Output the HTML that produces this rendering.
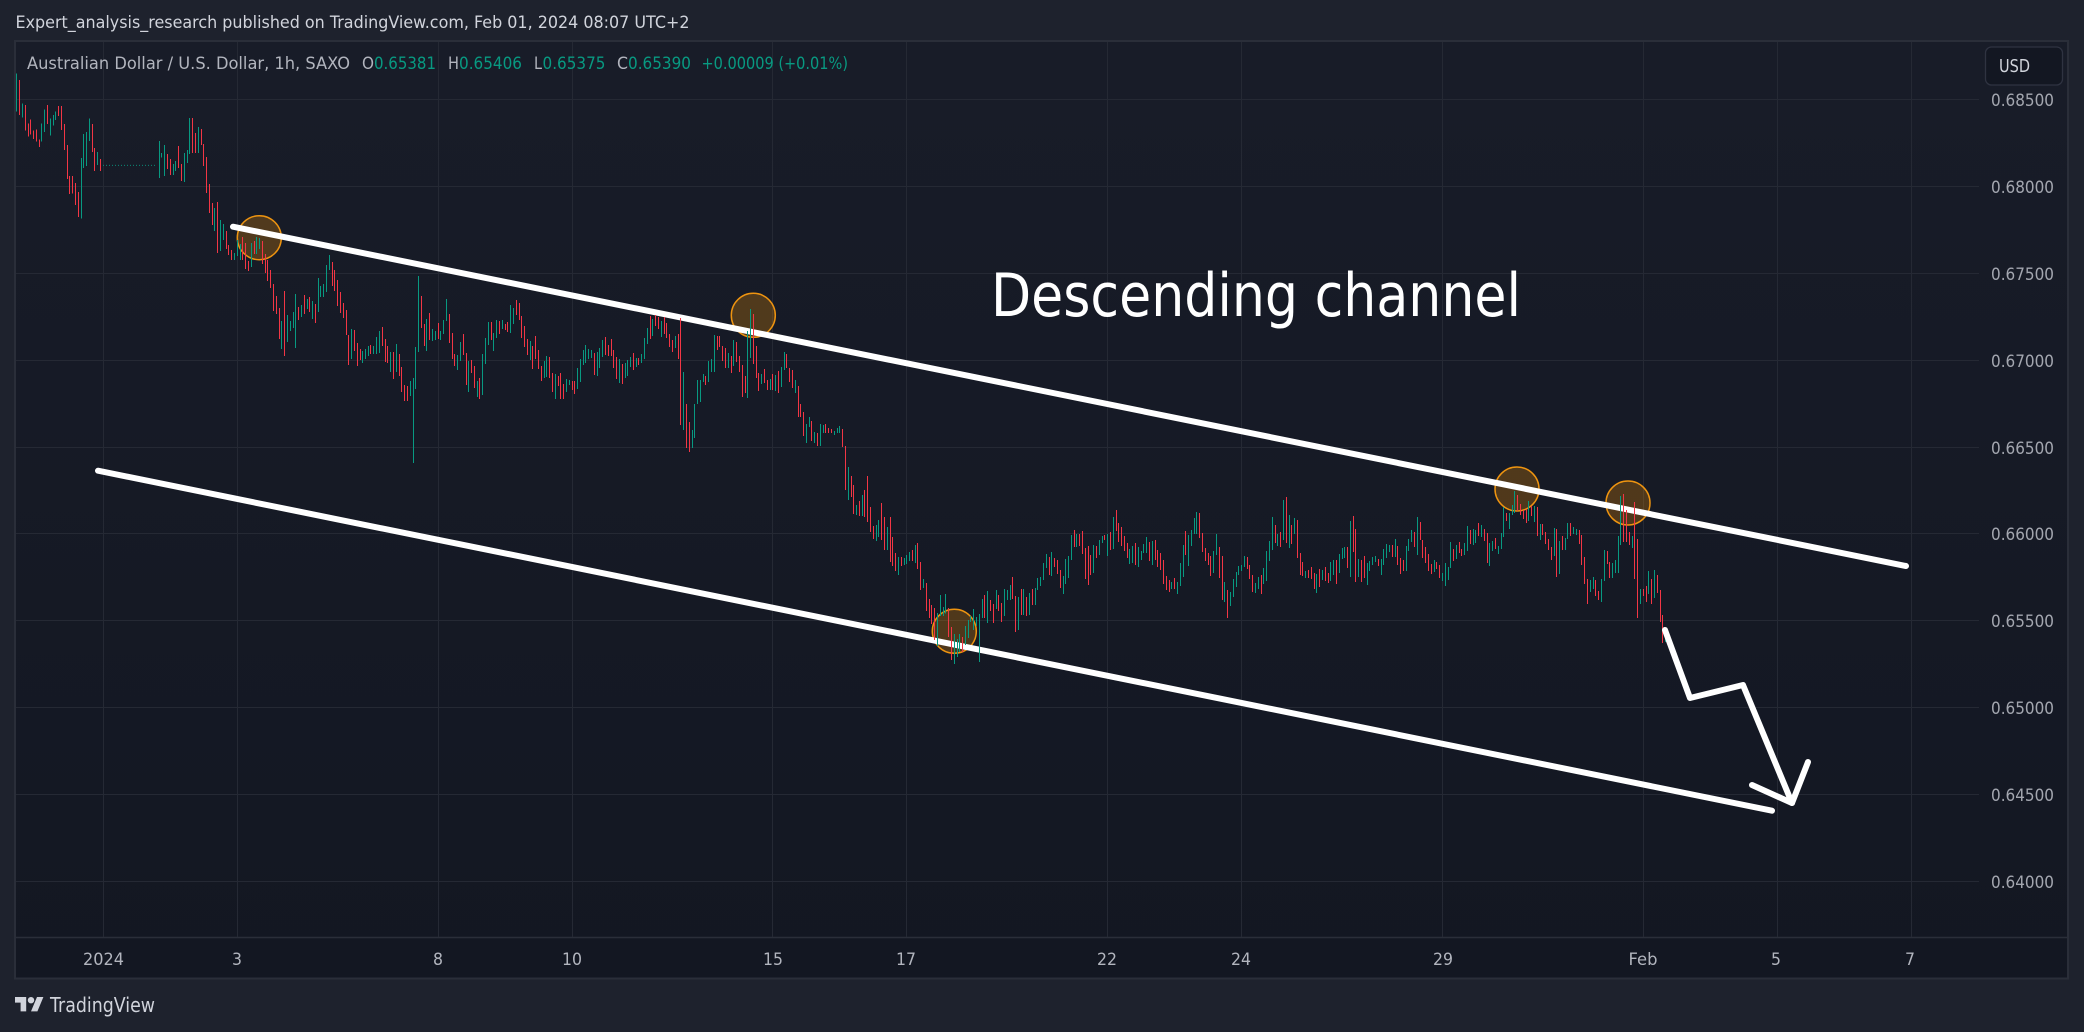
<!DOCTYPE html>
<html lang="en">
<head>
<meta charset="utf-8">
<title>AUD/USD Descending channel</title>
<style>
html,body{margin:0;padding:0;background:#1e222d;width:2084px;height:1032px;overflow:hidden}
svg{display:block;position:absolute;left:0;top:0}
text{font-family:"DejaVu Sans","Liberation Sans",sans-serif}
.lg{font-size:17px;fill:#b2b5be}
.gv{font-size:17px;fill:#089981}
.pr{font-size:17px;fill:#a3a6af}
.tm{font-size:17px;fill:#b2b5be;text-anchor:middle}
.g{stroke:#089981;stroke-width:3;fill:none;shape-rendering:crispEdges}
.r{stroke:#f23645;stroke-width:3;fill:none;shape-rendering:crispEdges}
</style>
</head>
<body>
<svg width="2084" height="1032" viewBox="0 0 2084 1032" xmlns="http://www.w3.org/2000/svg">
<defs>
<linearGradient id="bg" x1="0" y1="0" x2="0" y2="1">
<stop offset="0" stop-color="#181c28"/>
<stop offset="1" stop-color="#131722"/>
</linearGradient>
</defs>
<rect width="2084" height="1032" fill="#1e222d"/>
<text x="15.500" y="28" font-size="17" fill="#d1d4dc" textLength="674" lengthAdjust="spacingAndGlyphs">Expert_analysis_research published on TradingView.com, Feb 01, 2024 08:07 UTC+2</text>
<rect x="15" y="41" width="2053" height="937.500" fill="url(#bg)" stroke="#2a2e39" stroke-width="2"/>
<path d="M16 937.500H2067" stroke="#2a2e39" stroke-width="1.500" fill="none"/>

<!-- grid -->
<g stroke="#252934" stroke-width="1" fill="none" shape-rendering="crispEdges">
<path d="M16 99.500H1979M16 186.500H1979M16 273.500H1979M16 360.500H1979M16 447.500H1979M16 533.500H1979M16 620.500H1979M16 707.500H1979M16 794.500H1979M16 881.500H1979"/>
<path d="M103.500 42V937M237.500 42V937M438.500 42V937M572.500 42V937M772.500 42V937M906.500 42V937M1107.500 42V937M1241.500 42V937M1442.500 42V937M1643.500 42V937M1777.500 42V937M1911.500 42V937"/>
</g>

<!-- circles -->
<g fill="#ff9800" fill-opacity=".25" stroke="#ee9410" stroke-width="1.500">
<circle cx="259.300" cy="237.700" r="22"/>
<circle cx="753.300" cy="315.300" r="22"/>
<circle cx="954.300" cy="631.300" r="22"/>
<circle cx="1517" cy="489" r="22"/>
<circle cx="1628" cy="503" r="22"/>
</g>

<!-- channel lines -->
<g stroke="#fff" stroke-width="6" stroke-linecap="round" stroke-linejoin="round" fill="none">
<path d="M233 226.700L1906 566"/>
<path d="M98 470.700L1772 810.700"/>
</g>

<!-- bars, crop 1 -->
<g transform="translate(15 70) scale(.33333)">
<path class="g" d="M4 10V125M22 100V143M79 160V215M88 118V186M106 145V197M115 135V167M121 124V150M199 264V446M205 192V294M214 186V288M223 145V213M247 246V285M433 213V324M439 249V262M448 225V318M475 282V315M481 273V303M508 249V336M517 240V279M523 144V252M550 171V249M598 414V483M616 450V543M625 462V510M658 549V570M667 510V558M676 522V570M709 519V591M724 501V552M733 504V537"/>
<path class="r" d="M13 30V135M31 105V182M40 160V200M46 148V194M55 182V207M64 178V215M73 208V231M97 105V162M130 108V138M139 108V180M148 162V240M157 225V327M163 318V372M172 318V370M181 339V405M190 366V441M232 162V246M238 234V303M256 267V303M457 252V297M466 267V315M490 228V294M499 282V333M532 144V249M541 189V249M559 177V225M565 222V288M574 261V369M583 342V429M592 399V465M607 396V549M634 483V537M640 525V555M649 540V570M682 501V570M691 519V597M700 573V603M718 513V552"/>
<path d="M264 286H426" stroke="#089981" stroke-width="2.500" stroke-dasharray="3 6" fill="none"/>
</g>

<!-- bars, crop 2 -->
<g transform="translate(260 240) scale(.33333)">
<path class="g" d="M64 243V327M82 225V306M91 243V273M100 216V264M106 162V324M124 195V231M142 177V207M157 183V237M175 114V216M181 138V171M190 132V171M199 75V156M208 45V90M274 267V357M307 333V369M316 327V357M325 318V348M340 318V342M349 291V342M358 273V339M391 336V396M409 312V396M451 423V468M460 414V669M466 321V447M475 108V336M499 237V333M517 267V303M526 273V300M541 273V300M550 240V282M559 177V243M592 345V390M601 306V363M625 363V456M652 423V471M667 342V465M676 294V372M685 246V315M700 279V333M709 240V294M727 240V267M751 195V279M760 204V252M811 303V360M853 363V414M859 348V411M886 402V477M919 417V456M928 420V435M952 384V447M961 357V426M970 330V375M976 315V369M985 327V357M994 330V354M1012 336V408M1018 324V384M1027 300V351M1078 357V429M1096 369V414M1102 360V408M1111 351V381M1129 354V381M1144 342V369M1153 294V357M1162 264V312M1177 237V288M1204 243V291M1246 288V324"/>
<path class="r" d="M7 3V72M16 42V99M22 60V123M31 90V144M40 132V213M49 168V222M58 204V297M73 153V348M115 201V240M133 165V222M148 171V216M166 192V249M217 66V138M223 90V153M232 120V198M241 156V219M250 189V234M259 210V285M265 285V375M283 270V333M292 309V378M301 327V360M331 315V342M367 261V318M376 297V366M382 318V369M400 336V417M418 342V408M424 381V456M433 435V483M442 438V483M484 168V264M493 252V318M508 219V300M535 249V297M568 222V309M577 279V357M583 342V378M610 282V345M619 339V435M634 360V399M643 378V444M658 414V477M694 246V300M718 243V282M736 252V270M742 246V276M769 180V225M778 189V240M784 228V294M793 258V321M802 297V345M817 318V387M826 288V357M835 330V387M844 378V423M868 351V414M877 399V456M895 408V438M901 399V477M910 432V477M937 423V450M943 423V462M1003 339V405M1036 291V345M1045 315V348M1054 297V348M1060 330V384M1069 351V417M1087 372V432M1120 339V390M1135 354V375M1171 228V297M1186 225V258M1195 231V267M1213 231V282M1219 249V294M1228 282V321M1237 300V336M1255 282V357"/>
</g>

<!-- bars, crop 3 -->
<g transform="translate(600 280) scale(.33333)">
<path class="g" d="M250 276V450M277 450V504M283 372V474M292 300V372M301 300V366M310 282V306M325 243V306M334 237V276M343 165V276M385 219V264M400 180V258M442 153V354M451 87V234M484 282V312M511 297V330M526 285V333M544 261V321M553 216V270M586 300V339M619 432V489M628 411V441M643 456V489M661 432V498M670 435V459M703 453V465M712 444V459M718 438V459"/>
<path class="r" d="M241 114V435M259 372V504M268 426V516M316 288V315M352 168V210M358 168V201M367 198V243M376 204V264M394 228V279M409 186V246M418 228V276M427 255V351M436 288V339M460 102V252M469 198V294M475 279V333M493 267V309M502 300V330M517 282V330M535 273V339M559 222V264M568 264V306M577 270V324M595 318V411M601 372V411M610 396V468M634 423V483M652 459V498M676 432V459M685 444V459M694 447V459M727 447V501"/>
</g>

<!-- bars, crop 4 -->
<g transform="translate(780 380) scale(.33333)">
<path class="g" d="M205 261V360M229 375V405M247 345V408M289 435V483M295 420V471M322 441V510M355 531V585M373 534V555M379 525V552M388 516V543M406 495V549M430 597V624M472 699V798M481 645V708M490 681V708M496 642V700M523 762V852M532 777V831M538 762V816M556 738V795M565 720V774M571 708V726M580 687V750M589 711V738M598 702V846M607 657V714M622 633V729M649 630V687M673 627V708M682 630V660M691 615V660M715 651V750M730 627V705M748 639V705M766 624V675M772 594V630M781 591V618M790 549V600M799 522V564M814 516V588M850 588V642M856 537V612M865 528V594M874 465V540M889 462V501M940 495V579M958 480V525M967 468V489M982 462V528M1000 411V507M1048 507V552M1057 498V549M1075 501V561M1084 513V540M1090 492V519M1099 471V519M1117 483V555M1174 606V627M1192 606V642M1201 549V618M1210 495V591M1225 465V558"/>
<path class="r" d="M196 198V330M214 288V351M220 315V402M238 363V408M253 330V411M262 288V426M271 381V456M280 438V477M304 369V480M313 411V510M331 411V546M337 471V558M346 519V573M364 531V558M397 510V543M412 489V567M421 546V630M439 609V693M448 657V714M454 675V732M463 684V780M505 684V771M514 741V840M547 771V816M613 645V714M631 660V693M640 672V729M655 645V693M664 669V726M697 591V657M706 648V756M724 627V705M739 651V708M757 627V675M808 531V585M823 534V561M832 540V582M841 570V624M883 450V501M898 462V498M907 453V522M916 504V597M925 498V615M931 525V585M949 498V534M973 465V480M991 456V510M1009 390V453M1015 429V486M1024 441V498M1033 468V513M1042 489V534M1066 489V555M1108 486V543M1126 480V540M1132 510V561M1141 519V570M1150 540V612M1159 588V630M1168 600V636M1183 594V627M1216 453V525"/>
</g>

<!-- bars, crop 5 -->
<g transform="translate(1190 470) scale(.33333)">
<path class="g" d="M4 180V228M13 144V192M19 126V192M70 243V309M79 192V255M103 336V396M121 366V408M130 327V381M139 306V351M145 288V315M154 285V303M163 258V291M196 339V369M205 321V357M220 294V342M229 243V333M238 213V273M247 141V240M262 192V228M280 90V210M298 135V234M313 144V192M346 303V324M379 312V369M397 300V330M421 276V333M430 270V315M448 252V309M457 234V267M463 231V264M481 153V321M505 267V321M532 279V345M538 273V303M547 261V285M556 258V276M574 267V315M580 237V285M589 222V264M598 225V246M616 207V261M649 228V303M655 207V243M664 180V216M682 141V255M733 270V306M757 309V333M766 279V348M775 291V330M781 216V294M799 225V267M823 219V255M832 168V243M850 177V225M856 180V219M874 165V201M898 219V288M907 213V243M925 228V252M934 189V237M940 111V201M958 129V177M967 105V135M973 63V129M1015 93V153M1033 108V156M1051 162V210M1093 174V258M1108 213V312M1126 204V240M1132 159V207M1150 171V192M1159 177V195M1201 330V366M1210 321V357M1234 327V396M1243 240V333"/>
<path class="r" d="M28 129V204M37 189V246M46 234V273M55 249V285M61 258V318M88 231V324M97 258V390M112 360V444M172 261V297M178 285V327M187 315V366M214 315V372M256 165V219M271 186V231M289 81V219M304 165V222M322 150V264M331 249V315M337 276V318M355 300V324M364 291V327M373 309V357M388 297V351M406 291V333M415 309V339M439 270V342M472 231V294M490 138V246M496 177V336M514 270V336M523 258V324M565 267V288M607 225V261M622 228V285M631 264V312M640 270V303M673 186V231M691 156V210M697 210V264M706 231V279M715 252V303M724 282V312M739 276V297M748 285V324M790 237V273M808 216V249M814 237V258M841 180V222M865 159V198M883 177V213M892 189V279M916 204V237M949 129V153M982 75V123M991 102V135M1000 120V147M1009 117V159M1024 108V138M1042 111V198M1057 162V195M1066 186V222M1075 207V240M1084 231V270M1099 177V321M1117 198V240M1141 159V198M1168 180V222M1174 195V285M1183 261V342M1192 327V402M1216 330V378M1225 363V390M1252 243V282"/>
</g>

<!-- bars, crop 6 -->
<g transform="translate(1500 460) scale(.33333)">
<path class="g" d="M337 309V354M346 300V339M355 228V339M361 108V255M397 228V264M421 387V432M445 333V402M463 330V414M496 505V546"/>
<path class="r" d="M328 306V354M370 102V246M379 150V246M388 216V255M403 126V357M412 237V474M430 387V408M439 378V426M454 357V432M472 345V399M481 390V486M487 465V549"/>
</g>

<!-- arrow -->
<g stroke="#fff" stroke-width="6" stroke-linecap="round" stroke-linejoin="round" fill="none">
<path d="M1665 630L1690 698L1743 685L1792 803"/>
<path d="M1752 785L1792 803L1808 762"/>
</g>

<!-- headline -->
<text x="991" y="316" font-size="60" fill="#fff" textLength="530" lengthAdjust="spacingAndGlyphs">Descending channel</text>

<!-- legend -->
<text class="lg" x="27" y="69" textLength="323" lengthAdjust="spacingAndGlyphs">Australian Dollar / U.S. Dollar, 1h, SAXO</text>
<text class="lg" x="362" y="69" textLength="12" lengthAdjust="spacingAndGlyphs">O</text><text class="gv" x="374" y="69" textLength="62" lengthAdjust="spacingAndGlyphs">0.65381</text>
<text class="lg" x="448" y="69" textLength="11" lengthAdjust="spacingAndGlyphs">H</text><text class="gv" x="459" y="69" textLength="63" lengthAdjust="spacingAndGlyphs">0.65406</text>
<text class="lg" x="534" y="69" textLength="8" lengthAdjust="spacingAndGlyphs">L</text><text class="gv" x="542.500" y="69" textLength="63" lengthAdjust="spacingAndGlyphs">0.65375</text>
<text class="lg" x="617" y="69" textLength="11" lengthAdjust="spacingAndGlyphs">C</text><text class="gv" x="628" y="69" textLength="63" lengthAdjust="spacingAndGlyphs">0.65390</text>
<text class="gv" x="701.500" y="69" textLength="146.500" lengthAdjust="spacingAndGlyphs">+0.00009 (+0.01%)</text>

<!-- USD button -->
<rect x="1985.500" y="47" width="77" height="38" rx="6" fill="#131722" stroke="#2f3341" stroke-width="1.300"/>
<text x="1999" y="72" font-size="18" fill="#d1d4dc" textLength="31" lengthAdjust="spacingAndGlyphs">USD</text>

<!-- price axis -->
<text class="pr" x="1991" y="106" textLength="63" lengthAdjust="spacingAndGlyphs">0.68500</text>
<text class="pr" x="1991" y="193" textLength="63" lengthAdjust="spacingAndGlyphs">0.68000</text>
<text class="pr" x="1991" y="280" textLength="63" lengthAdjust="spacingAndGlyphs">0.67500</text>
<text class="pr" x="1991" y="367" textLength="63" lengthAdjust="spacingAndGlyphs">0.67000</text>
<text class="pr" x="1991" y="454" textLength="63" lengthAdjust="spacingAndGlyphs">0.66500</text>
<text class="pr" x="1991" y="540" textLength="63" lengthAdjust="spacingAndGlyphs">0.66000</text>
<text class="pr" x="1991" y="627" textLength="63" lengthAdjust="spacingAndGlyphs">0.65500</text>
<text class="pr" x="1991" y="714" textLength="63" lengthAdjust="spacingAndGlyphs">0.65000</text>
<text class="pr" x="1991" y="801" textLength="63" lengthAdjust="spacingAndGlyphs">0.64500</text>
<text class="pr" x="1991" y="888" textLength="63" lengthAdjust="spacingAndGlyphs">0.64000</text>

<!-- time axis -->
<text class="tm" x="103.500" y="965" textLength="41" lengthAdjust="spacingAndGlyphs">2024</text>
<text class="tm" x="237" y="965" textLength="10" lengthAdjust="spacingAndGlyphs">3</text>
<text class="tm" x="438" y="965" textLength="10" lengthAdjust="spacingAndGlyphs">8</text>
<text class="tm" x="572" y="965" textLength="20" lengthAdjust="spacingAndGlyphs">10</text>
<text class="tm" x="773" y="965" textLength="20" lengthAdjust="spacingAndGlyphs">15</text>
<text class="tm" x="906" y="965" textLength="20" lengthAdjust="spacingAndGlyphs">17</text>
<text class="tm" x="1107" y="965" textLength="20" lengthAdjust="spacingAndGlyphs">22</text>
<text class="tm" x="1241" y="965" textLength="20" lengthAdjust="spacingAndGlyphs">24</text>
<text class="tm" x="1443" y="965" textLength="20" lengthAdjust="spacingAndGlyphs">29</text>
<text class="tm" x="1643" y="965" textLength="29" lengthAdjust="spacingAndGlyphs">Feb</text>
<text class="tm" x="1776" y="965" textLength="10" lengthAdjust="spacingAndGlyphs">5</text>
<text class="tm" x="1910" y="965" textLength="10" lengthAdjust="spacingAndGlyphs">7</text>

<!-- logo -->
<g transform="translate(15 993.800) scale(.8)" fill="#d1d4dc">
<path d="M14 22H7V11H0V4h14v18zM28 22h-8l7.500-18h8L28 22z"/>
<circle cx="20" cy="8" r="4"/>
</g>
<text x="50" y="1012" font-size="20" fill="#d1d4dc" textLength="105" lengthAdjust="spacingAndGlyphs">TradingView</text>
</svg>
</body>
</html>
